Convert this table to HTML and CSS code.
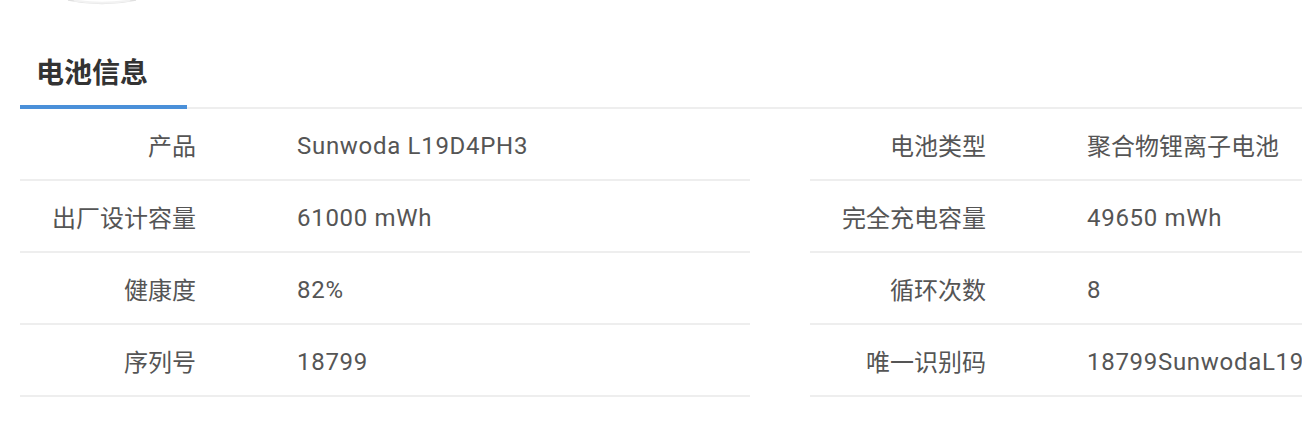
FILE: index.html
```html
<!DOCTYPE html>
<html lang="zh-CN">
<head>
<meta charset="utf-8">
<title>电池信息</title>
<link rel="stylesheet" href="styles.css">
</head>
<body>
<div class="page">
  <svg class="avatar-edge" width="240" height="8" viewBox="0 0 240 8">
    <path d="M68 0 Q102 7 136 0" fill="none" stroke="#e0e0e0" stroke-width="1.5"/>
    <path d="M74 0.5 Q102 5 130 0.5" fill="none" stroke="#f2f2f2" stroke-width="2"/>
  </svg>
  <div class="tabs">
    <div class="tab active">电池信息</div>
  </div>
  <div class="tables">
    <div class="table">
      <div class="row"><div class="label">产品</div><div class="value">Sunwoda L19D4PH3</div></div>
      <div class="row"><div class="label">出厂设计容量</div><div class="value">61000 mWh</div></div>
      <div class="row"><div class="label">健康度</div><div class="value">82%</div></div>
      <div class="row"><div class="label">序列号</div><div class="value">18799</div></div>
    </div>
    <div class="table">
      <div class="row"><div class="label">电池类型</div><div class="value cjk">聚合物锂离子电池</div></div>
      <div class="row"><div class="label">完全充电容量</div><div class="value">49650 mWh</div></div>
      <div class="row"><div class="label">循环次数</div><div class="value">8</div></div>
      <div class="row"><div class="label">唯一识别码</div><div class="value">18799SunwodaL19D4PH3</div></div>
    </div>
  </div>
</div>
</body>
</html>
```
FILE: styles.css
```css
html, body {
  margin: 0;
  padding: 0;
  background: #fff;
}
body {
  font-family: "Noto Sans CJK SC", "Noto Sans", sans-serif;
  color: #555;
  overflow: hidden;
}
.page {
  width: 1302px;
  height: 437px;
  overflow: hidden;
}
.avatar-edge {
  display: block;
  height: 8px;
}
.tabs {
  margin-top: 32px;
  margin-left: 20px;
  display: flex;
  border-bottom: 2px solid #eeeeee;
}
.tab {
  width: 151px;
  padding-left: 16px;
  height: 65px;
  line-height: 62px;
  font-size: 28px;
  font-weight: bold;
  color: #333;
}
.tab.active {
  border-bottom: 4px solid #4a90d9;
  margin-bottom: -2px;
}
.tables {
  display: flex;
  gap: 60px;
  margin-left: 20px;
}
.table {
  flex: 0 0 730px;
}
.row {
  display: flex;
  align-items: center;
  height: 70px;
  border-bottom: 2px solid #eeeeee;
  font-size: 24px;
  white-space: nowrap;
}
.label {
  width: 176px;
  flex: 0 0 176px;
  text-align: right;
  color: #555;
}
.value {
  padding-left: 101px;
  padding-top: 4px;
  color: #555;
  letter-spacing: 0.7px;
  font-family: "Roboto", "Noto Sans CJK SC", sans-serif;
}
.value.cjk {
  letter-spacing: 0;
  padding-top: 0;
  font-family: "Noto Sans CJK SC", sans-serif;
}
```
